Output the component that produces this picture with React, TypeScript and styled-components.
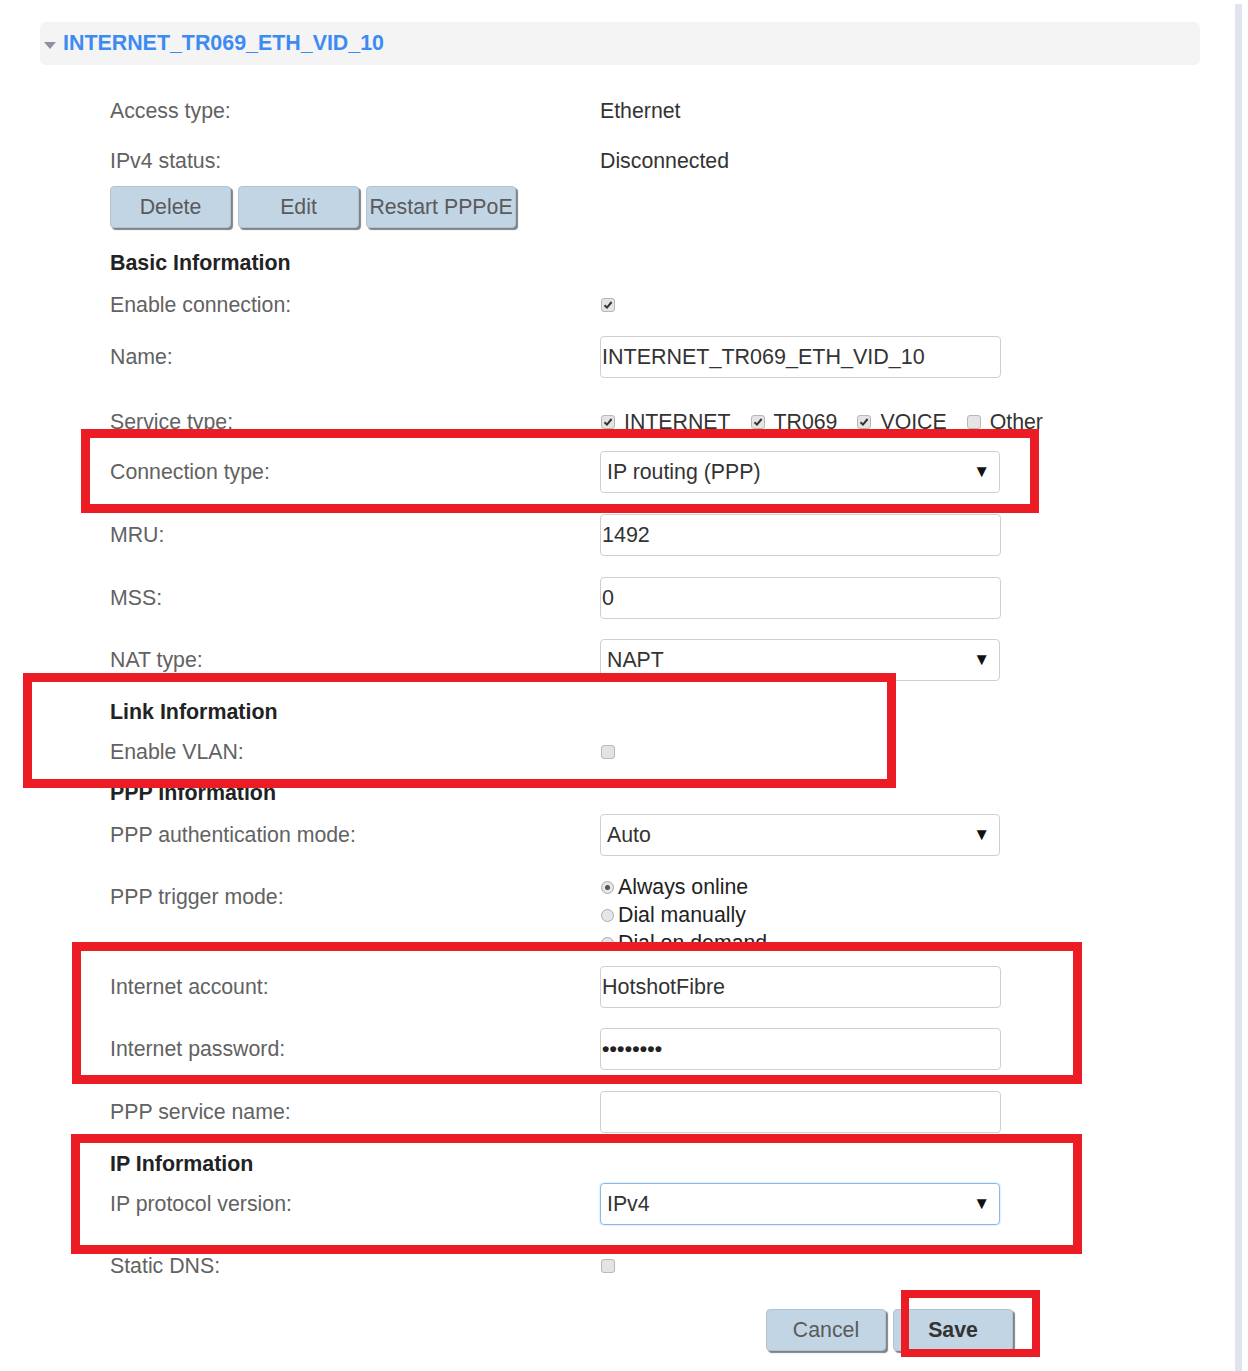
import React from "react";
import styled, { createGlobalStyle } from "styled-components";

const GlobalStyle = createGlobalStyle`
  html, body {
    margin: 0;
    padding: 0;
    background: #ffffff;
  }
  body {
    font-family: "Liberation Sans", Arial, sans-serif;
    font-size: 21px;
  }
`;

const Frame = styled.div`
  position: relative;
  display: flex;
  width: 1248px;
  min-height: 1371px;
`;

const Main = styled.div`
  box-sizing: border-box;
  width: 1235px;
  padding: 22px 35px 0 40px;
`;

const SideRule = styled.div`
  width: 7px;
  margin-top: 4px;
  background: #dfe4ee;
`;

const Header = styled.div`
  display: flex;
  align-items: center;
  height: 43px;
  background: #f4f4f4;
  border-radius: 6px;
  padding-left: 4px;
`;

const Caret = styled.span`
  width: 0;
  height: 0;
  border-left: 6px solid transparent;
  border-right: 6px solid transparent;
  border-top: 7px solid #8c939c;
  margin: 4px 7px 0 0;
`;

const Title = styled.span`
  color: #3d8bf2;
  font-weight: bold;
  font-size: 21.4px;
`;

const Form = styled.div`
  padding-left: 70px;
`;

const Row = styled.div<{ $mt?: number }>`
  display: flex;
  align-items: center;
  height: 42px;
  margin-top: ${(p) => p.$mt ?? 0}px;
`;

const TallRow = styled.div<{ $mt?: number }>`
  display: flex;
  align-items: flex-start;
  margin-top: ${(p) => p.$mt ?? 0}px;
`;

const Label = styled.div<{ $top?: number }>`
  width: 490px;
  flex-shrink: 0;
  color: #626262;
  font-size: 21.3px;
  line-height: 28px;
  margin-top: ${(p) => p.$top ?? 0}px;
`;

const Section = styled.div`
  color: #222;
  font-weight: bold;
  font-size: 21.4px;
`;

const Value = styled.div`
  color: #333;
  font-size: 21.3px;
`;

const TextBox = styled.input`
  box-sizing: border-box;
  width: 401px;
  height: 42px;
  border: 1px solid #cfcfcf;
  border-radius: 4px;
  padding: 0 1px;
  font-family: "Liberation Sans", Arial, sans-serif;
  font-size: 21.5px;
  color: #333;
  background: #fff;
  outline: none;
`;

const Dots = styled.div`
  box-sizing: border-box;
  display: flex;
  align-items: center;
  width: 401px;
  height: 42px;
  border: 1px solid #cfcfcf;
  border-radius: 4px;
  padding: 0 1px;
  font-weight: bold;
  font-size: 21px;
  letter-spacing: 0.2px;
  color: #222;
`;

const Select = styled.div<{ $focus?: boolean }>`
  box-sizing: border-box;
  display: flex;
  align-items: center;
  justify-content: space-between;
  width: 400px;
  height: 42px;
  border: 1px solid ${(p) => (p.$focus ? "#8db6ea" : "#cfcfcf")};
  box-shadow: ${(p) => (p.$focus ? "0 0 2px #a9c8f0" : "none")};
  border-radius: 4px;
  padding: 0 9px 0 6px;
  color: #333;
  font-size: 21.3px;
`;

const Arrow = styled.span`
  font-size: 17px;
  color: #111;
`;

const Btn = styled.button<{ $w: number; $bold?: boolean }>`
  box-sizing: border-box;
  width: ${(p) => p.$w}px;
  height: 42px;
  padding: 0 2px;
  border: 1px solid #b3c3d1;
  border-radius: 4px;
  background: #c2d5e5;
  box-shadow: 2px 2px 1px #7f8385;
  font-family: "Liberation Sans", Arial, sans-serif;
  font-size: 21.3px;
  font-weight: ${(p) => (p.$bold ? "bold" : "normal")};
  color: ${(p) => (p.$bold ? "#333" : "#5a5a5a")};
  white-space: nowrap;
  overflow: hidden;
`;

const BtnRow = styled.div<{ $mt?: number; $pl?: number }>`
  display: flex;
  gap: 7px;
  margin-top: ${(p) => p.$mt ?? 0}px;
  padding-left: ${(p) => p.$pl ?? 0}px;
`;

const Box = styled.span`
  box-sizing: border-box;
  display: inline-flex;
  align-items: center;
  justify-content: center;
  width: 14px;
  height: 14px;
  border: 1px solid #b8b8b8;
  border-radius: 3px;
  background: #e4e4e4;
  margin-left: 1px;
  flex-shrink: 0;
`;

const Options = styled.div`
  display: flex;
  align-items: center;
  color: #333;
  font-size: 21.3px;
`;

const Option = styled.span`
  display: inline-flex;
  align-items: center;
  gap: 9px;
  margin-right: 19px;
`;

const Radios = styled.div`
  display: flex;
  flex-direction: column;
  color: #222;
  font-size: 21.3px;
`;

const RadioLine = styled.div`
  display: flex;
  align-items: center;
  gap: 4px;
  height: 28px;
`;

const Circle = styled.span<{ $on?: boolean }>`
  box-sizing: border-box;
  display: inline-flex;
  align-items: center;
  justify-content: center;
  width: 13px;
  height: 13px;
  margin-left: 1px;
  border-radius: 50%;
  border: 1px solid #aaa;
  background: #e6e6e6;
  &::after {
    content: "";
    display: ${(p) => (p.$on ? "block" : "none")};
    width: 5px;
    height: 5px;
    border-radius: 50%;
    background: #555;
  }
`;

const Mark = styled.div<{ $x: number; $y: number; $w: number; $h: number; $b?: number }>`
  position: absolute;
  box-sizing: border-box;
  left: ${(p) => p.$x}px;
  top: ${(p) => p.$y}px;
  width: ${(p) => p.$w}px;
  height: ${(p) => p.$h}px;
  border: ${(p) => p.$b ?? 9}px solid #ec1c24;
  pointer-events: none;
`;

function Check({ on }: { on?: boolean }) {
  return (
    <Box>
      {on && (
        <svg width="10" height="10" viewBox="0 0 10 10">
          <path d="M1.5 5.2 L4 7.6 L8.6 2" fill="none" stroke="#333" strokeWidth="2" />
        </svg>
      )}
    </Box>
  );
}

export default function App() {
  return (
    <>
      <GlobalStyle />
      <Frame>
        <Main>
          <Header>
            <Caret />
            <Title>INTERNET_TR069_ETH_VID_10</Title>
          </Header>
          <Form>
            <Row $mt={25}>
              <Label>Access type:</Label>
              <Value>Ethernet</Value>
            </Row>
            <Row $mt={8}>
              <Label>IPv4 status:</Label>
              <Value>Disconnected</Value>
            </Row>
            <BtnRow $mt={4}>
              <Btn $w={121}>Delete</Btn>
              <Btn $w={121}>Edit</Btn>
              <Btn $w={150}>Restart PPPoE</Btn>
            </BtnRow>
            <Row $mt={14}>
              <Section>Basic Information</Section>
            </Row>
            <Row $mt={0}>
              <Label>Enable connection:</Label>
              <Check on />
            </Row>
            <Row $mt={10}>
              <Label>Name:</Label>
              <TextBox readOnly defaultValue="INTERNET_TR069_ETH_VID_10" />
            </Row>
            <Row $mt={23}>
              <Label>Service type:</Label>
              <Options>
                <Option>
                  <Check on />
                  INTERNET
                </Option>
                <Option>
                  <Check on />
                  TR069
                </Option>
                <Option>
                  <Check on />
                  VOICE
                </Option>
                <Option>
                  <Check />
                  Other
                </Option>
              </Options>
            </Row>
            <Row $mt={8}>
              <Label>Connection type:</Label>
              <Select>
                IP routing (PPP)
                <Arrow>▼</Arrow>
              </Select>
            </Row>
            <Row $mt={21}>
              <Label>MRU:</Label>
              <TextBox readOnly defaultValue="1492" />
            </Row>
            <Row $mt={21}>
              <Label>MSS:</Label>
              <TextBox readOnly defaultValue="0" />
            </Row>
            <Row $mt={20}>
              <Label>NAT type:</Label>
              <Select>
                NAPT
                <Arrow>▼</Arrow>
              </Select>
            </Row>
            <Row $mt={10}>
              <Section>Link Information</Section>
            </Row>
            <Row $mt={-2}>
              <Label>Enable VLAN:</Label>
              <Check />
            </Row>
            <Row $mt={-1}>
              <Section>PPP Information</Section>
            </Row>
            <Row $mt={0}>
              <Label>PPP authentication mode:</Label>
              <Select>
                Auto
                <Arrow>▼</Arrow>
              </Select>
            </Row>
            <TallRow $mt={17}>
              <Label $top={10}>PPP trigger mode:</Label>
              <Radios>
                <RadioLine>
                  <Circle $on />
                  Always online
                </RadioLine>
                <RadioLine>
                  <Circle />
                  Dial manually
                </RadioLine>
                <RadioLine>
                  <Circle />
                  Dial on demand
                </RadioLine>
              </Radios>
            </TallRow>
            <Row $mt={9}>
              <Label>Internet account:</Label>
              <TextBox readOnly defaultValue="HotshotFibre" />
            </Row>
            <Row $mt={20}>
              <Label>Internet password:</Label>
              <Dots>••••••••</Dots>
            </Row>
            <Row $mt={21}>
              <Label>PPP service name:</Label>
              <TextBox readOnly defaultValue="" />
            </Row>
            <Row $mt={10}>
              <Section>IP Information</Section>
            </Row>
            <Row $mt={-2}>
              <Label>IP protocol version:</Label>
              <Select $focus>
                IPv4
                <Arrow>▼</Arrow>
              </Select>
            </Row>
            <Row $mt={20}>
              <Label>Static DNS:</Label>
              <Check />
            </Row>
            <BtnRow $mt={22} $pl={656}>
              <Btn $w={120}>Cancel</Btn>
              <Btn $w={120} $bold>
                Save
              </Btn>
            </BtnRow>
          </Form>
        </Main>
        <SideRule />

        <Mark $x={81} $y={429} $w={958} $h={84} />
        <Mark $x={23} $y={673} $w={873} $h={115} />
        <Mark $x={72} $y={942} $w={1010} $h={142} />
        <Mark $x={71} $y={1134} $w={1011} $h={120} />
        <Mark $x={901} $y={1290} $w={139} $h={67} $b={8} />
      </Frame>
    </>
  );
}
